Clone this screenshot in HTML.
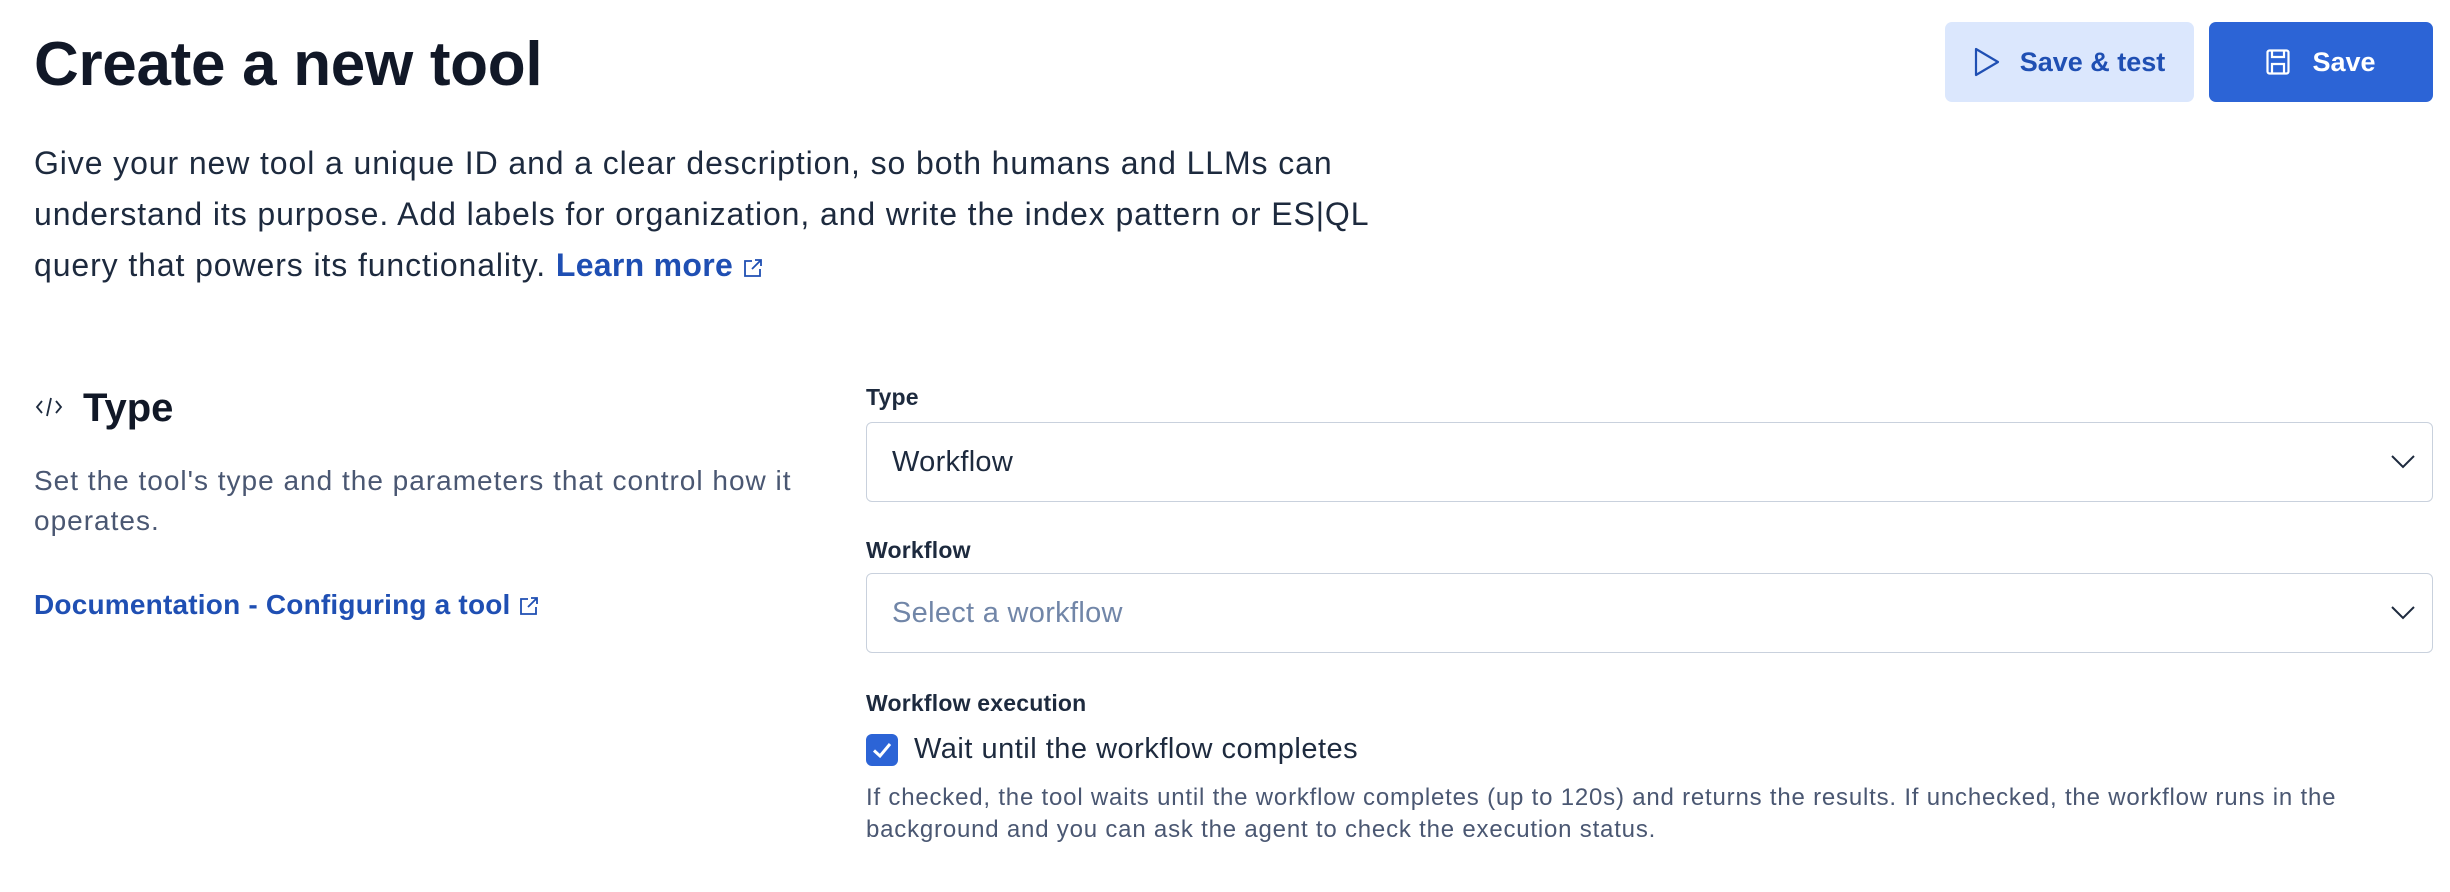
<!DOCTYPE html>
<html><head><meta charset="utf-8"><style>
body{margin:0;width:2450px;height:892px;background:#fff;font-family:"Liberation Sans",sans-serif;color:#1d2a3e;position:relative;overflow:hidden}
.a{position:absolute;white-space:nowrap}
.btn{position:absolute;top:22px;height:80px;border-radius:7px;display:flex;align-items:center;justify-content:center;font-size:27px;font-weight:bold}
.sel{position:absolute;left:866px;width:1565px;height:78px;border:1px solid #c9d1dd;border-radius:6px;display:flex;align-items:center;font-size:29px;letter-spacing:0.3px;box-sizing:content-box}
.sel span{margin-left:25px}
.sel svg{position:absolute;right:16px;top:28px}
.lbl{font-size:23px;font-weight:bold;line-height:1;color:#1d2a3e;letter-spacing:0.2px}
</style></head><body>
<div class="a" style="left:34px;top:34px;font-size:62px;font-weight:bold;line-height:1;color:#111827;letter-spacing:-0.3px">Create a new tool</div>
<div class="btn" style="left:1945px;width:249px;background:#dbe7fd;color:#1f4fb3">
<svg width="26" height="30" viewBox="0 0 26 30" style="margin-right:20px"><path d="M2 2 L24 15 L2 28 Z" fill="none" stroke="#1f4fb3" stroke-width="2.2" stroke-linejoin="round"/></svg>Save &amp; test</div>
<div class="btn" style="left:2209px;width:224px;background:#2c64d6;color:#fff">
<svg width="24" height="26" viewBox="0 0 24 26" style="margin-right:22px"><rect x="1.5" y="1.5" width="21" height="23" rx="2" fill="none" stroke="#fff" stroke-width="2.2"/><path d="M6 1.5 V8 H18 V1.5 M6 24.5 V15 H18 V24.5" fill="none" stroke="#fff" stroke-width="2.2"/></svg>Save</div>
<div class="a" style="left:34px;top:138px;font-size:32px;line-height:51px;color:#1d2a3e;letter-spacing:0.9px">Give your new tool a unique ID and a clear description, so both humans and LLMs can<br>understand its purpose. Add labels for organization, and write the index pattern or ES|QL<br>query that powers its functionality. <span style="color:#1f4fb3;font-weight:bold;letter-spacing:0.3px">Learn more</span> <svg width="20" height="20" viewBox="0 0 20 20" style="vertical-align:-2px"><path d="M9 3H2v15h15v-7M12 2h6v6M18 2L9 11" fill="none" stroke="#1f4fb3" stroke-width="1.8"/></svg></div>
<svg class="a" style="left:34px;top:395px" width="30" height="24" viewBox="0 0 30 24"><path d="M8 6 L3 12 L8 18 M22 6 L27 12 L22 18 M17 3 L13 21" fill="none" stroke="#1d2a3e" stroke-width="1.8"/></svg>
<div class="a" style="left:83px;top:388px;font-size:40px;font-weight:bold;line-height:1;color:#111827">Type</div>
<div class="a" style="left:34px;top:461px;font-size:28px;line-height:40px;color:#4a5772;letter-spacing:1px">Set the tool's type and the parameters that control how it<br>operates.</div>
<div class="a" style="left:34px;top:591px;font-size:28px;line-height:1;color:#1f4fb3;font-weight:bold;letter-spacing:0.2px">Documentation - Configuring a tool <svg width="20" height="20" viewBox="0 0 20 20" style="vertical-align:-2px"><path d="M9 3H2v15h15v-7M12 2h6v6M18 2L9 11" fill="none" stroke="#1f4fb3" stroke-width="1.8"/></svg></div>
<div class="a lbl" style="left:866px;top:386px">Type</div>
<div class="sel" style="top:422px"><span>Workflow</span><svg width="26" height="22" viewBox="0 0 26 22"><path d="M2 5 L13 16 L24 5" fill="none" stroke="#1d2a3e" stroke-width="2"/></svg></div>
<div class="a lbl" style="left:866px;top:539px">Workflow</div>
<div class="sel" style="top:573px"><span style="color:#7186a8">Select a workflow</span><svg width="26" height="22" viewBox="0 0 26 22"><path d="M2 5 L13 16 L24 5" fill="none" stroke="#1d2a3e" stroke-width="2"/></svg></div>
<div class="a lbl" style="left:866px;top:692px">Workflow execution</div>
<div class="a" style="left:866px;top:734px;width:32px;height:32px;background:#2c64d6;border-radius:6px"><svg width="32" height="32" viewBox="0 0 32 32"><path d="M8 16.5 L14 22 L24 10" fill="none" stroke="#fff" stroke-width="3"/></svg></div>
<div class="a" style="left:914px;top:735px;font-size:29px;line-height:1;color:#1d2a3e;letter-spacing:0.5px">Wait until the workflow completes</div>
<div class="a" style="left:866px;top:782px;font-size:24px;line-height:32px;color:#4a5772;letter-spacing:0.8px">If checked, the tool waits until the workflow completes (up to 120s) and returns the results. If unchecked, the workflow runs in the<br>background and you can ask the agent to check the execution status.</div>
</body></html>
